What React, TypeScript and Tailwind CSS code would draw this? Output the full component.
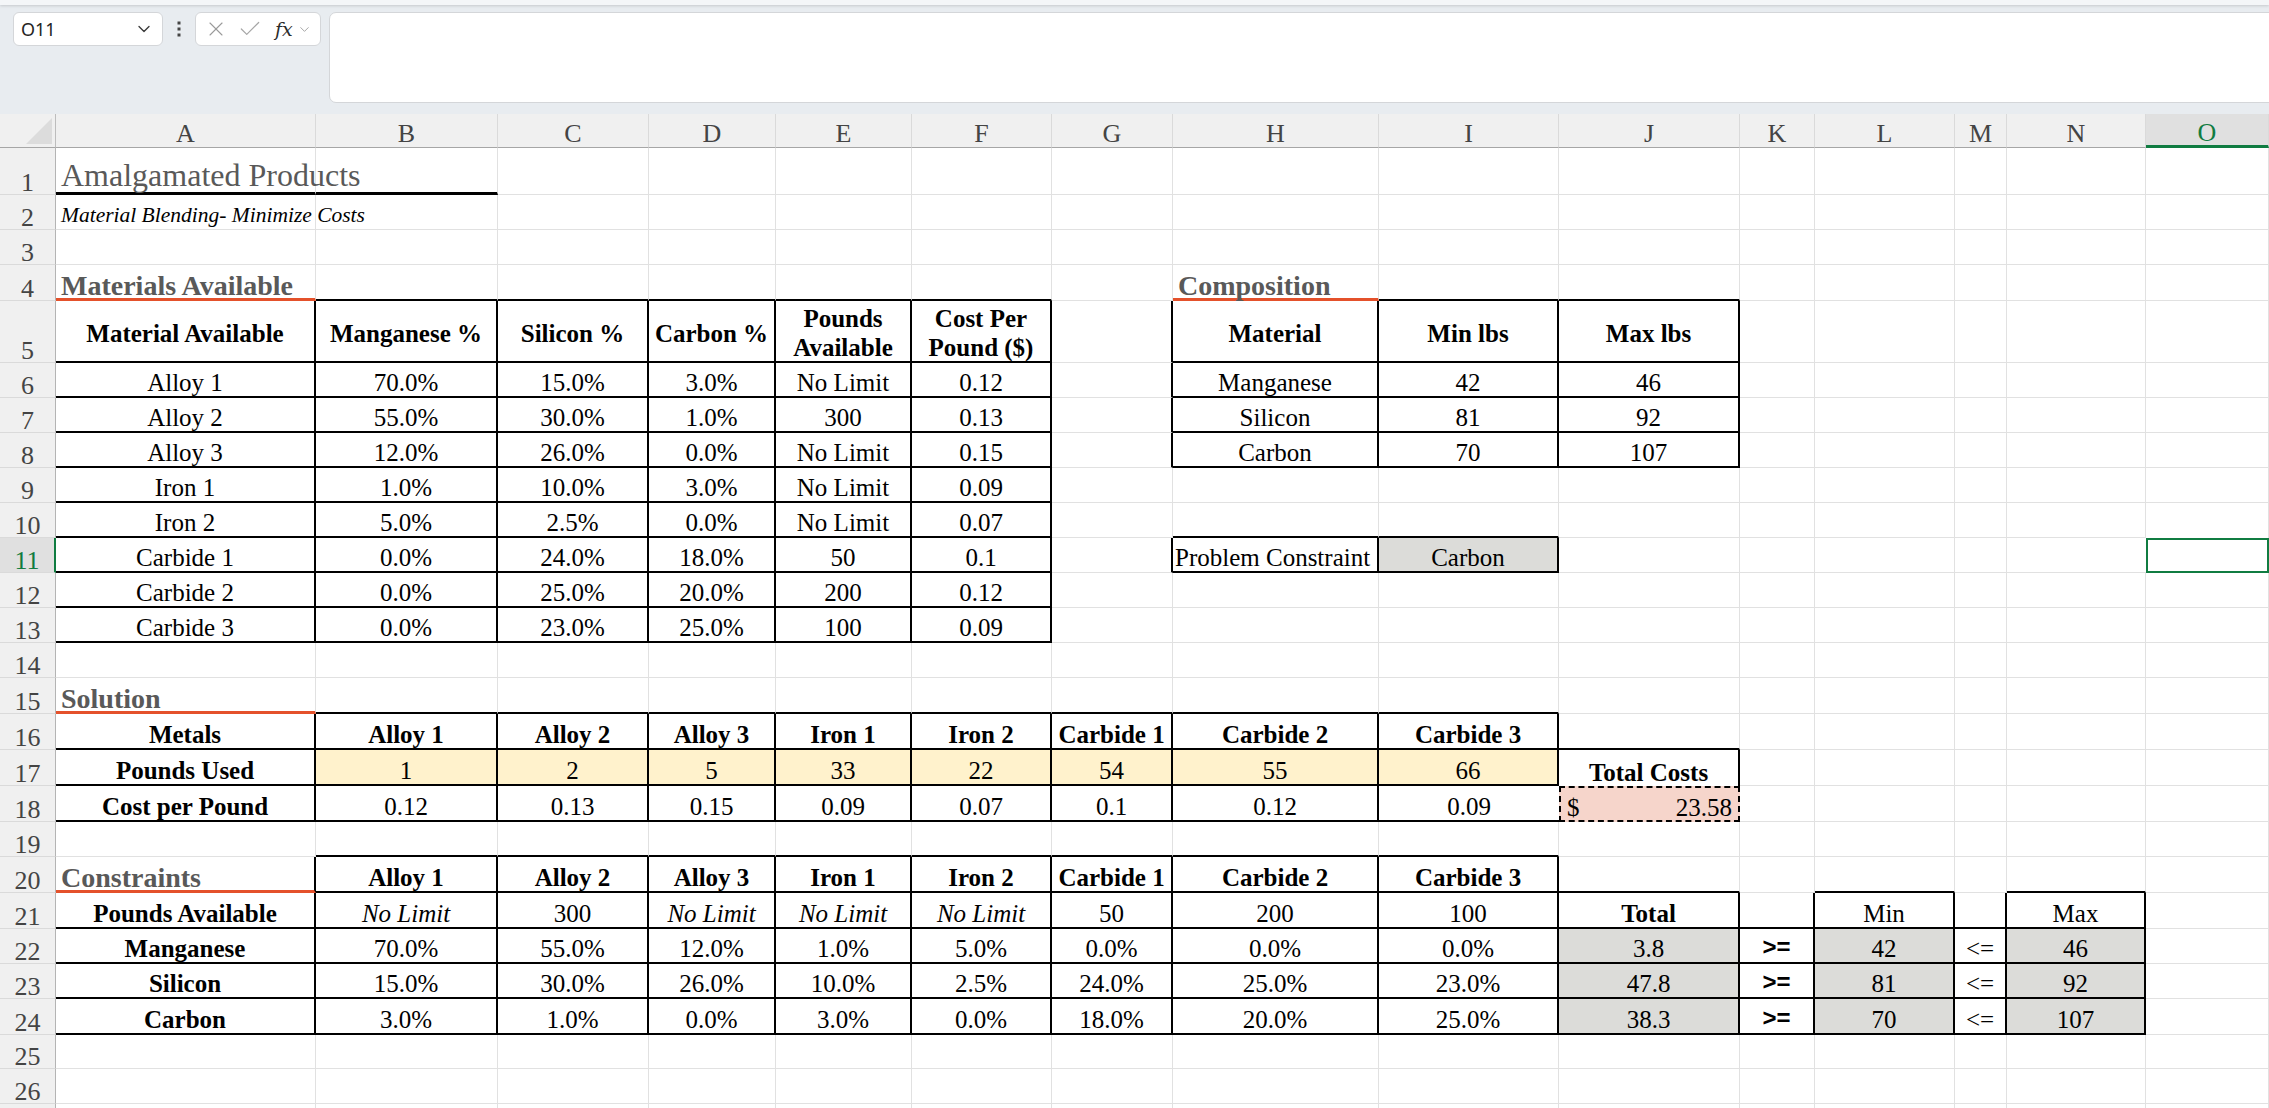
import { Check, ChevronDown, X } from 'lucide-react';
import type { ReactNode } from 'react';

type Edge = 'g' | 'k' | 'o' | 't' | 'n';
type StyleKey = 'title' | 'sub' | 'sec' | 'th' | 'thc' | 'td' | 'it' | 'left' | 'op';
type BgKey = 'y' | 'gray';
interface Spec {
	v: string;
	s: StyleKey;
	bg?: BgKey;
}

const COLS = 'ABCDEFGHIJKLMNO'.split('');
// row 27 only peeks in at the bottom edge, so it gets no label
const NROWS = 27;
const ci = (l: string) => COLS.indexOf(l);

// each style carries its own size so nothing fights over font-size
const STYLE: Record<StyleKey, string> = {
	title: 'items-end justify-start pl-[5px] pb-[1px] text-[32px] leading-none text-[#595959]',
	sub: 'items-end justify-start pl-[5px] pb-[3px] italic text-[21.5px] leading-none',
	sec: 'items-end justify-start pl-[5px] pb-[1px] font-bold text-[28px] leading-[22px] text-[#595959]',
	th: 'items-end justify-center pb-[1px] font-bold text-[25px] leading-none',
	thc: 'items-center justify-center pt-[6px] text-center font-bold text-[25px] leading-[1.15]',
	td: 'items-end justify-center pb-[1px] text-[25px] leading-none',
	it: 'items-end justify-center pb-[1px] italic text-[25px] leading-none',
	left: 'items-end justify-start pl-[2px] pb-[1px] text-[25px] leading-none',
	op: 'items-end justify-center pb-[3px] font-bold font-["Liberation_Sans",sans-serif] text-[24px] leading-none',
};

const BG: Record<BgKey, string> = {
	y: 'bg-[#fff2cc]',
	gray: 'bg-[#dcdcd9]',
};

// right / bottom edge of every cell; top and left come from the neighbour
const RIGHT: Record<Edge, string> = {
	g: 'border-r border-r-[#e1e1e1]',
	k: 'border-r-2 border-r-black',
	o: 'border-r border-r-[#e1e1e1]',
	t: 'border-r-2 border-r-black',
	n: 'border-r-0',
};
const BOTTOM: Record<Edge, string> = {
	g: 'border-b border-b-[#e1e1e1]',
	k: 'border-b-2 border-b-black',
	o: 'border-b-[3px] border-b-[#e4512b]',
	t: 'border-b-[3px] border-b-black',
	n: 'border-b-0',
};

const rb: Edge[][] = Array.from({ length: NROWS + 1 }, () => COLS.map((): Edge => 'g'));
const bb: Edge[][] = Array.from({ length: NROWS + 1 }, () => COLS.map((): Edge => 'g'));

function box(r1: number, c1: string, r2: number, c2: string) {
	const a = ci(c1);
	const b = ci(c2);
	for (let r = r1; r <= r2; r++) {
		for (let c = a; c <= b; c++) {
			rb[r][c] = 'k';
			bb[r][c] = 'k';
		}
		if (a > 0) rb[r][a - 1] = 'k';
	}
	if (r1 > 1) for (let c = a; c <= b; c++) bb[r1 - 1][c] = 'k';
}

box(5, 'A', 13, 'F');
box(5, 'H', 8, 'J');
box(11, 'H', 11, 'I');
box(16, 'A', 18, 'I');
box(20, 'B', 24, 'I');
box(21, 'A', 24, 'A');
box(21, 'J', 24, 'J');
box(21, 'L', 24, 'L');
box(21, 'N', 24, 'N');
for (let r = 21; r <= 24; r++) {
	bb[r][ci('K')] = 'k';
	bb[r][ci('M')] = 'k';
}
rb[17][ci('J')] = 'k';
bb[16][ci('J')] = 'k';
bb[1][ci('A')] = 't';
bb[1][ci('B')] = 't';
bb[4][ci('A')] = 'o';
bb[4][ci('H')] = 'o';
bb[15][ci('A')] = 'o';
bb[20][ci('A')] = 'o';
// dashed total cell and the active cell draw their own frame
bb[17][ci('J')] = 'n';
rb[18][ci('I')] = 'n';
bb[10][ci('O')] = 'n';
rb[11][ci('N')] = 'n';

const cells: Record<string, Spec> = {};
function put(ref: string, v: string, s: StyleKey = 'td', bg?: BgKey) {
	cells[ref] = { v, s, bg };
}
function putRow(r: number, start: string, vals: string[], s: StyleKey = 'td', bg?: BgKey) {
	vals.forEach((v, i) => put(`${COLS[ci(start) + i]}${r}`, v, s, bg));
}

const METALS = ['Alloy 1', 'Alloy 2', 'Alloy 3', 'Iron 1', 'Iron 2', 'Carbide 1', 'Carbide 2', 'Carbide 3'];
const MATERIALS = [
	['Alloy 1', '70.0%', '15.0%', '3.0%', 'No Limit', '0.12'],
	['Alloy 2', '55.0%', '30.0%', '1.0%', '300', '0.13'],
	['Alloy 3', '12.0%', '26.0%', '0.0%', 'No Limit', '0.15'],
	['Iron 1', '1.0%', '10.0%', '3.0%', 'No Limit', '0.09'],
	['Iron 2', '5.0%', '2.5%', '0.0%', 'No Limit', '0.07'],
	['Carbide 1', '0.0%', '24.0%', '18.0%', '50', '0.1'],
	['Carbide 2', '0.0%', '25.0%', '20.0%', '200', '0.12'],
	['Carbide 3', '0.0%', '23.0%', '25.0%', '100', '0.09'],
];
const LIMITS = [
	['Manganese', '3.8', '42', '46', ['70.0%', '55.0%', '12.0%', '1.0%', '5.0%', '0.0%', '0.0%', '0.0%']],
	['Silicon', '47.8', '81', '92', ['15.0%', '30.0%', '26.0%', '10.0%', '2.5%', '24.0%', '25.0%', '23.0%']],
	['Carbon', '38.3', '70', '107', ['3.0%', '1.0%', '0.0%', '3.0%', '0.0%', '18.0%', '20.0%', '25.0%']],
] as const;

put('A1', 'Amalgamated Products', 'title');
put('A2', 'Material Blending- Minimize Costs', 'sub');
put('A4', 'Materials Available', 'sec');
put('H4', 'Composition', 'sec');
putRow(5, 'A', ['Material Available', 'Manganese %', 'Silicon %', 'Carbon %', 'Pounds\nAvailable', 'Cost Per\nPound ($)'], 'thc');
putRow(5, 'H', ['Material', 'Min lbs', 'Max lbs'], 'thc');
MATERIALS.forEach((row, i) => putRow(6 + i, 'A', row));
putRow(6, 'H', ['Manganese', '42', '46']);
putRow(7, 'H', ['Silicon', '81', '92']);
putRow(8, 'H', ['Carbon', '70', '107']);
put('H11', 'Problem Constraint', 'left');
put('I11', 'Carbon', 'td', 'gray');
put('A15', 'Solution', 'sec');
putRow(16, 'A', ['Metals', ...METALS], 'th');
put('A17', 'Pounds Used', 'th');
putRow(17, 'B', ['1', '2', '5', '33', '22', '54', '55', '66'], 'td', 'y');
put('J17', 'Total Costs', 'th');
put('A18', 'Cost per Pound', 'th');
putRow(18, 'B', ['0.12', '0.13', '0.15', '0.09', '0.07', '0.1', '0.12', '0.09']);
put('A20', 'Constraints', 'sec');
putRow(20, 'B', METALS, 'th');
put('A21', 'Pounds Available', 'th');
['No Limit', '300', 'No Limit', 'No Limit', 'No Limit', '50', '200', '100'].forEach((v, i) =>
	put(`${COLS[1 + i]}21`, v, v === 'No Limit' ? 'it' : 'td'),
);
put('J21', 'Total', 'th');
put('L21', 'Min');
put('N21', 'Max');
LIMITS.forEach(([name, total, min, max, pct], i) => {
	const r = 22 + i;
	put(`A${r}`, name, 'th');
	putRow(r, 'B', [...pct]);
	put(`J${r}`, total, 'td', 'gray');
	put(`K${r}`, '>=', 'op');
	put(`L${r}`, min, 'td', 'gray');
	put(`M${r}`, '<=');
	put(`N${r}`, max, 'td', 'gray');
});

function NameBox() {
	return (
		<div className="flex h-[34px] w-[150px] items-center justify-between rounded-[6px] border border-[#d4d6d9] bg-white pl-[7px] pr-[8px]">
			<span className="font-['Noto_Sans',sans-serif] text-[18px] text-[#242424]">O11</span>
			<ChevronDown size={20} strokeWidth={1.6} className="text-[#3a3a3a]" />
		</div>
	);
}

function FormulaBar() {
	return (
		<div className="h-[114px] bg-[#e8ecf0]">
			<div className="h-[5px] bg-[#f4f6f8] shadow-[0_1px_3px_rgba(0,0,0,0.15)]" />
			<div className="flex items-start pl-[13px] pt-[7px]">
				<NameBox />
				<div className="flex h-[34px] w-[32px] items-center justify-center">
					<svg width="4" height="16" viewBox="0 0 4 16">
						<rect x="0.5" y="0.5" width="3" height="3" fill="#444" />
						<rect x="0.5" y="6.5" width="3" height="3" fill="#444" />
						<rect x="0.5" y="12.5" width="3" height="3" fill="#444" />
					</svg>
				</div>
				<div className="flex h-[34px] w-[126px] items-center rounded-[6px] border border-[#d4d6d9] bg-white pl-[8px]">
					<X size={24} strokeWidth={1.1} className="text-[#9a9a9a]" />
					<Check size={26} strokeWidth={1.1} className="ml-[9px] text-[#a6a6a6]" />
					<span className="ml-[12px] font-['DejaVu_Serif',serif] text-[19px] italic text-[#2b2b2b]">fx</span>
					<ChevronDown size={15} strokeWidth={1.4} className="ml-[4px] text-[#9a9a9a]" />
				</div>
				<div className="ml-[8px] mr-[-20px] h-[91px] flex-1 rounded-[7px] border border-[#d4d6d9] bg-white" />
			</div>
		</div>
	);
}

function Corner() {
	return (
		<div className="flex items-end justify-end border-b border-r border-b-[#a6a6a6] border-r-[#bdbdbd] bg-[#f0f0f0] pb-[3px] pr-[3px]">
			<svg width="26" height="26" viewBox="0 0 26 26">
				<polygon points="26,0 26,26 0,26" fill="#dcdcdc" />
			</svg>
		</div>
	);
}

function Body({ r, c }: { r: number; c: number }) {
	const ref = `${COLS[c]}${r}`;
	const spec = cells[ref];
	const edges = `${RIGHT[rb[r][c]]} ${BOTTOM[bb[r][c]]}`;

	if (ref === 'J18') {
		return (
			<div className="flex border-0">
				<div className="flex h-full w-full items-end justify-between border-2 border-dashed border-black bg-[#f6d5cb] px-[6px] text-[25px] leading-none">
					<span>$</span>
					<span>23.58</span>
				</div>
			</div>
		);
	}
	if (ref === 'O11') {
		return (
			<div className="flex border-0">
				<div className="h-full w-full border-2 border-[#107c41]" />
			</div>
		);
	}

	let content: ReactNode = null;
	if (spec) {
		content = spec.v.includes('\n')
			? spec.v.split('\n').map((line) => <span key={line} className="block">{line}</span>)
			: spec.v;
	}
	return (
		<div className={`flex min-w-0 whitespace-nowrap ${edges} ${spec ? STYLE[spec.s] : ''} ${spec?.bg ? BG[spec.bg] : ''}`}>
			{spec?.s === 'thc' ? <div>{content}</div> : content}
		</div>
	);
}

function Sheet() {
	const out: ReactNode[] = [<Corner key="corner" />];
	COLS.forEach((l) =>
		out.push(
			<div
				key={`h${l}`}
				className={
					l === 'O'
						? 'flex items-center justify-center border-b-[3px] border-r border-b-[#107c41] border-r-[#dadada] bg-[#e0e0e0] pt-[7px] text-[26px] leading-none text-[#107c41]'
						: 'flex items-center justify-center border-b border-r border-b-[#a6a6a6] border-r-[#dadada] bg-[#f0f0f0] pt-[7px] text-[26px] leading-none text-[#444]'
				}
			>
				{l}
			</div>,
		),
	);
	for (let r = 1; r <= NROWS; r++) {
		out.push(
			<div
				key={`r${r}`}
				className={
					r === 11
						? 'flex items-end justify-center border-b border-r-2 border-b-[#dadada] border-r-[#107c41] bg-[#e0e0e0] text-[26px] leading-[22px] text-[#107c41]'
						: 'flex items-end justify-center border-b border-r border-b-[#dadada] border-r-[#b4b4b4] bg-[#f0f0f0] text-[26px] leading-[22px] text-[#444]'
				}
			>
				{r < NROWS ? r : null}
			</div>,
		);
		COLS.forEach((_, c) => out.push(<Body key={`${r}-${c}`} r={r} c={c} />));
	}

	return (
		<div className="grid grid-cols-[56px_260px_182px_151px_127px_136px_140px_121px_206px_180px_181px_75px_140px_52px_139px_minmax(123px,1fr)] grid-rows-[34px_47px_35px_35px_36px_62px_35px_35px_35px_35px_35px_35px_35px_35px_35px_36px_36px_36px_36px_35px_36px_36px_35px_35px_36px_34px_35px_35px]">
			{out}
		</div>
	);
}

export default function App() {
	return (
		<div className="h-[1108px] w-[2269px] overflow-hidden bg-white font-['Liberation_Serif',serif] text-black">
			<FormulaBar />
			<Sheet />
		</div>
	);
}
